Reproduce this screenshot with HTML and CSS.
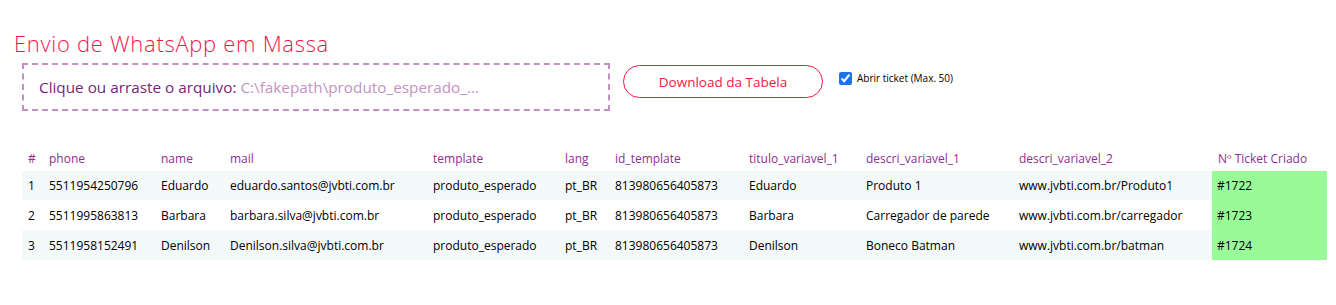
FILE: index.html
```html
<!DOCTYPE html>
<html lang="pt-BR">
<head>
    <meta charset="UTF-8">
    <meta name="viewport" content="width=device-width, initial-scale=1.0">
    <title>Envio de WhatsApp em Massa</title>
    <link rel="stylesheet" href="styles.css">
</head>
<body>
    <div class="page">
        <h1 class="title">Envio de WhatsApp em Massa</h1>

        <div class="toolbar">
            <label class="dropzone">
                <span>Clique ou arraste o arquivo: <span class="file-name">C:\fakepath\produto_esperado_...</span></span>
            </label>
            <button class="download-button">Download da Tabela</button>
            <label class="ticket-option">
                <input type="checkbox" checked>
                Abrir ticket (Max. 50)
            </label>
        </div>

        <table class="send-table">
            <colgroup>
                <col style="width: 21px">
                <col style="width: 112px">
                <col style="width: 69px">
                <col style="width: 203px">
                <col style="width: 132px">
                <col style="width: 50px">
                <col style="width: 134px">
                <col style="width: 117px">
                <col style="width: 153px">
                <col style="width: 199px">
                <col style="width: 115px">
            </colgroup>
            <thead>
                <tr>
                    <th>#</th>
                    <th>phone</th>
                    <th>name</th>
                    <th>mail</th>
                    <th>template</th>
                    <th>lang</th>
                    <th>id_template</th>
                    <th>titulo_variavel_1</th>
                    <th>descri_variavel_1</th>
                    <th>descri_variavel_2</th>
                    <th>Nº Ticket Criado</th>
                </tr>
            </thead>
            <tbody>
                <tr>
                    <td>1</td>
                    <td>5511954250796</td>
                    <td>Eduardo</td>
                    <td>eduardo.santos@jvbti.com.br</td>
                    <td>produto_esperado</td>
                    <td>pt_BR</td>
                    <td>813980656405873</td>
                    <td>Eduardo</td>
                    <td>Produto 1</td>
                    <td>www.jvbti.com.br/Produto1</td>
                    <td class="ticket">#1722</td>
                </tr>
                <tr>
                    <td>2</td>
                    <td>5511995863813</td>
                    <td>Barbara</td>
                    <td>barbara.silva@jvbti.com.br</td>
                    <td>produto_esperado</td>
                    <td>pt_BR</td>
                    <td>813980656405873</td>
                    <td>Barbara</td>
                    <td>Carregador de parede</td>
                    <td>www.jvbti.com.br/carregador</td>
                    <td class="ticket">#1723</td>
                </tr>
                <tr>
                    <td>3</td>
                    <td>5511958152491</td>
                    <td>Denilson</td>
                    <td>Denilson.silva@jvbti.com.br</td>
                    <td>produto_esperado</td>
                    <td>pt_BR</td>
                    <td>813980656405873</td>
                    <td>Denilson</td>
                    <td>Boneco Batman</td>
                    <td>www.jvbti.com.br/batman</td>
                    <td class="ticket">#1724</td>
                </tr>
            </tbody>
        </table>
    </div>
</body>
</html>
```

FILE: styles.css
```css
body {
    margin: 0;
    font-family: "Open Sans", sans-serif;
    background: #ffffff;
    color: #000000;
}
.page {
    padding: 28px 9px 0 14px;
}
.title {
    margin: 0;
    font-size: 22px;
    font-weight: 300;
    line-height: 30px;
    letter-spacing: 0.7px;
    color: #f2174a;
}
.toolbar {
    display: flex;
    align-items: flex-start;
    margin: 5px 0 0 8px;
}
.dropzone {
    box-sizing: border-box;
    width: 588px;
    height: 48px;
    display: flex;
    align-items: center;
    padding: 0 15px;
    border: 2px dashed #c48fc4;
    font-size: 15.3px;
    color: #74267a;
    white-space: nowrap;
}
.file-name {
    color: #c493c4;
}
.download-button {
    box-sizing: border-box;
    width: 200px;
    height: 33px;
    margin: 2px 0 0 13px;
    border: 1px solid #f2174a;
    border-radius: 17px;
    background: #ffffff;
    color: #f2174a;
    font-family: "Open Sans", sans-serif;
    font-size: 13.5px;
    cursor: pointer;
}
.ticket-option {
    display: flex;
    align-items: center;
    margin: 8px 0 0 12px;
    font-size: 10px;
    color: #000000;
}
.ticket-option input {
    width: 13px;
    height: 13px;
    margin: 0 5px 0 4px;
    accent-color: #1a73e8;
}
.send-table {
    margin: 34px 0 0 8px;
    border-collapse: collapse;
    table-layout: fixed;
    font-size: 12px;
}
.send-table th {
    height: 26px;
    padding: 0 6px;
    text-align: left;
    font-weight: 400;
    color: #8f2e8f;
    vertical-align: middle;
    white-space: nowrap;
}
.send-table td {
    height: 30px;
    padding: 0 6px;
    white-space: nowrap;
    vertical-align: middle;
}
.send-table tbody tr:first-child td {
    height: 29px;
}
.send-table tbody tr:nth-child(odd) {
    background: #f3f8f8;
}
.send-table td.ticket {
    padding-left: 5px;
    background: #98fb98;
}
```
